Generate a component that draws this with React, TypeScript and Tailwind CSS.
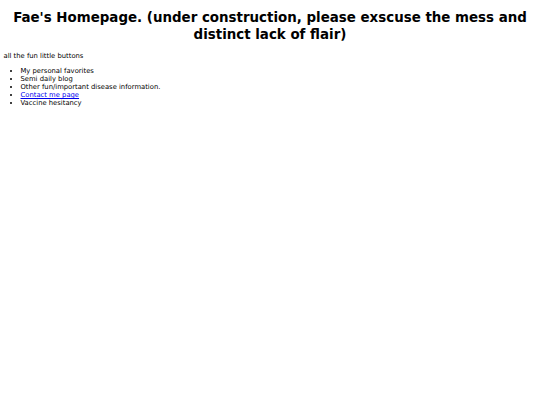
export default function App() {
  return (
    <div className="min-h-[405px] bg-white px-[3.5px] text-[6.8px] leading-[8px] text-black" style={{ fontFamily: '"DejaVu Sans", Verdana, sans-serif' }}>
      <h1 className="pt-[9px] text-center text-[13.4px] font-bold leading-[17px]">
        Fae's Homepage. (under construction, please exscuse the mess and distinct lack of flair)
      </h1>
      <p className="mt-[9px]">all the fun little buttons</p>
      <ul className="mt-[7px] list-disc pl-[17px]">
        <li>My personal favorites</li>
        <li>Semi daily blog</li>
        <li>Other fun/important disease information.</li>
        <li>
          <a href="#" className="text-[#0000ee] underline">Contact me page</a>
        </li>
        <li>Vaccine hesitancy</li>
      </ul>
    </div>
  );
}
